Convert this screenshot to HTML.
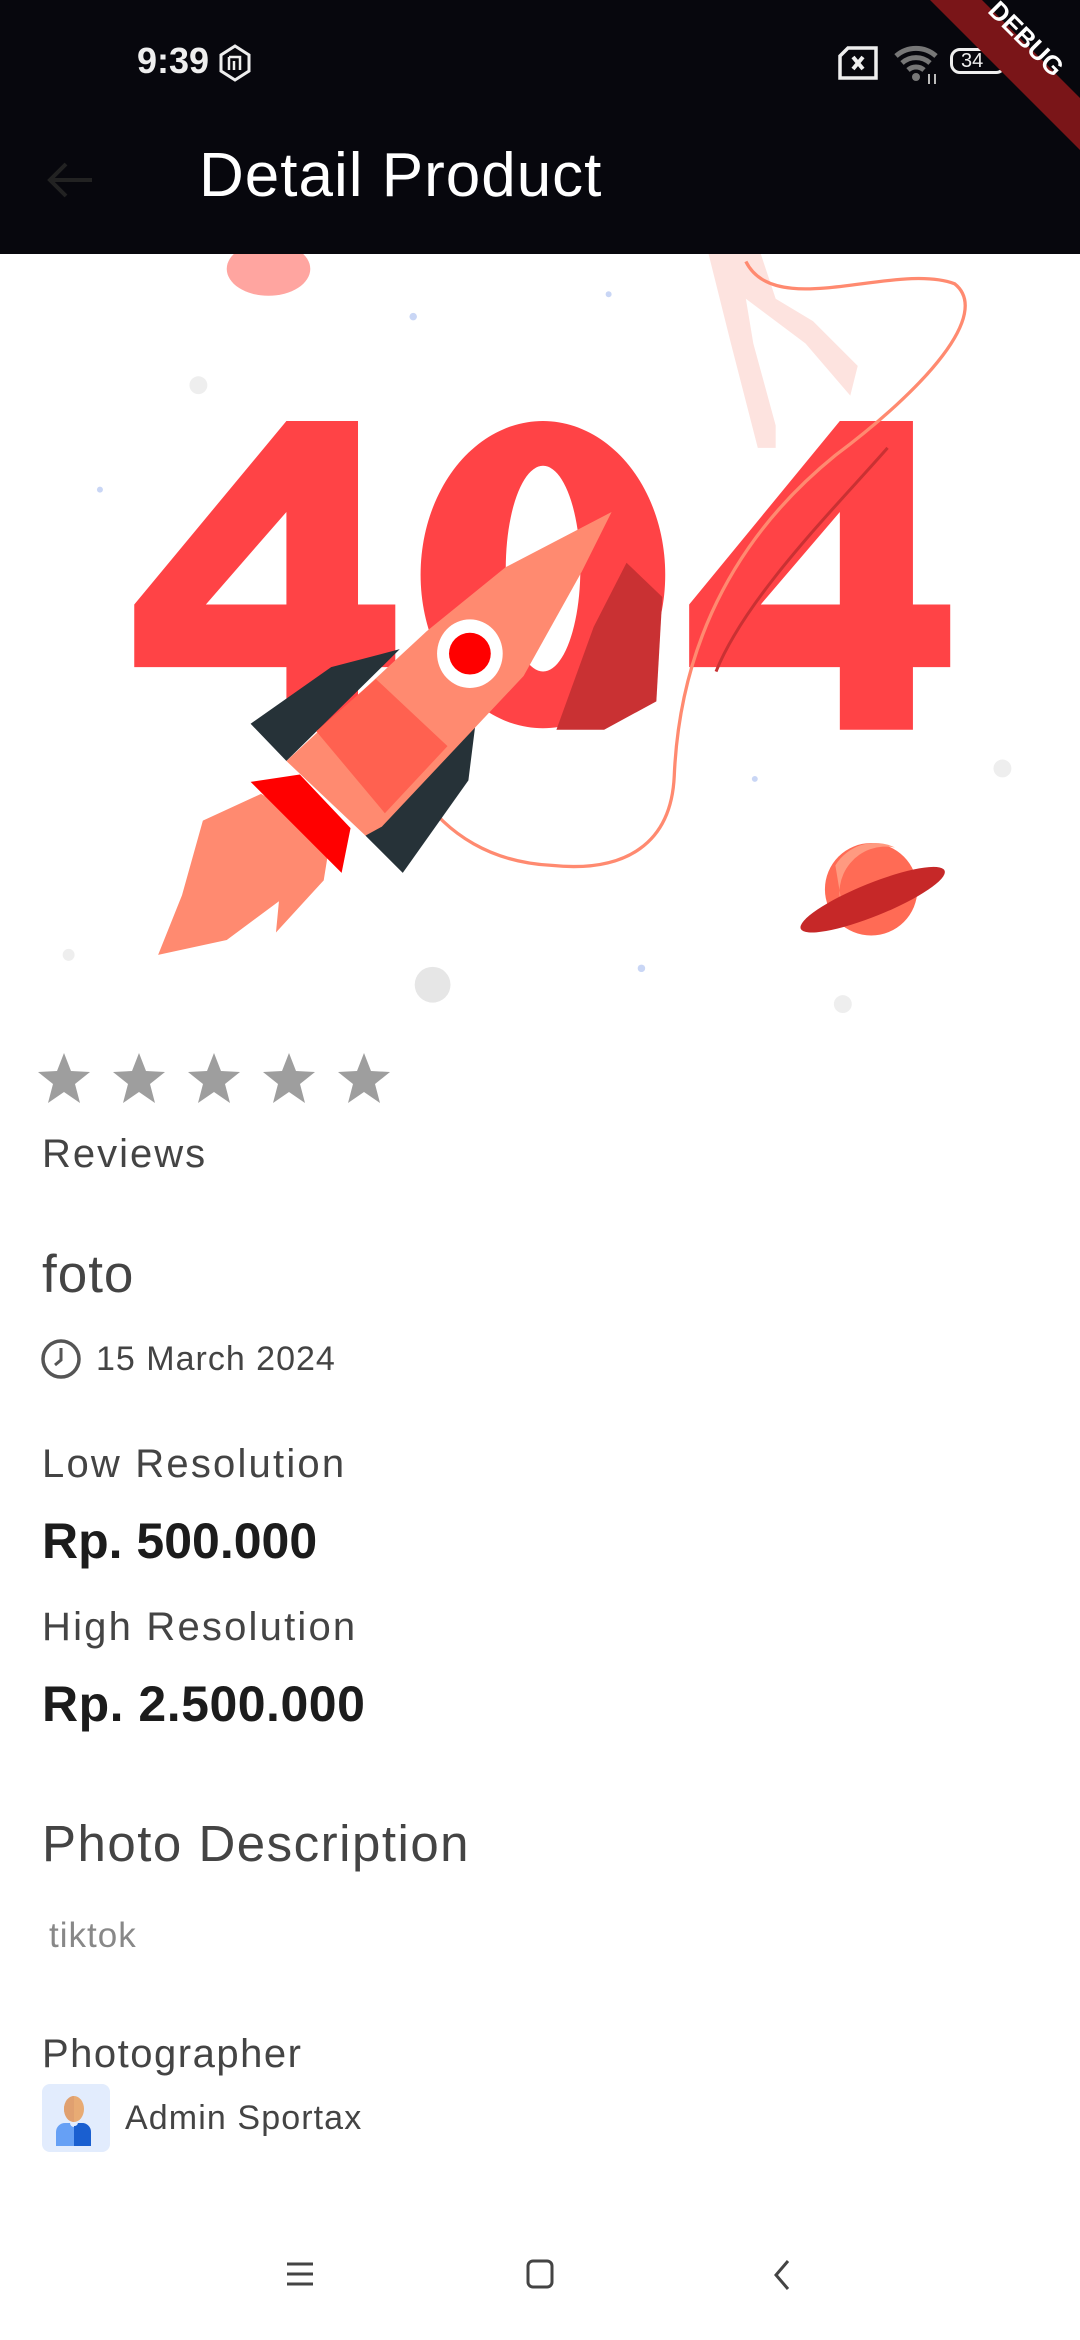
<!DOCTYPE html>
<html><head><meta charset="utf-8"><style>
*{margin:0;padding:0;box-sizing:border-box}
body{width:1080px;height:2340px;background:#fff;font-family:"Liberation Sans",sans-serif;position:relative;overflow:hidden;color:#444}
.abs{position:absolute;white-space:nowrap}
#hdr{position:absolute;left:0;top:0;width:1080px;height:254px;background:#07070d}
</style></head><body>
<div id="hdr">
  <div class="abs" style="left:137px;top:40px;font-size:36px;color:#eee;font-weight:bold">9:39</div>
  <svg class="abs" style="left:218px;top:44px" width="34" height="38" viewBox="0 0 34 38"><path d="M17 2L31 11V27L17 36L3 27V11Z" fill="none" stroke="#eee" stroke-width="3"/><path d="M11 13h11v13M11 13v13M16 17v9M22 17v9" stroke="#eee" stroke-width="2.5" fill="none"/></svg>
  <svg class="abs" style="left:838px;top:46px" width="40" height="34" viewBox="0 0 40 34"><path d="M10 2H38V32H2V10Z" fill="none" stroke="#eee" stroke-width="3.5"/><path d="M15 11l10 12M25 11l-10 12" stroke="#eee" stroke-width="4"/></svg>
  <svg class="abs" style="left:893px;top:44px" width="48" height="40" viewBox="0 0 48 40"><path d="M3 12a30 30 0 0 1 40 0M9 19a21 21 0 0 1 28 0M15 26a12 12 0 0 1 16 0" stroke="#777" stroke-width="5" fill="none"/><circle cx="23" cy="33" r="4" fill="#777"/><path d="M36 30v10M42 30v10" stroke="#bbb" stroke-width="2"/></svg>
  <div class="abs" style="left:950px;top:48px;width:56px;height:26px;border:3px solid #eee;border-radius:10px;font-size:20px;color:#eee;text-align:left;padding-left:8px;line-height:20px">34</div>
  <svg class="abs" style="left:40px;top:155px" width="60" height="50" viewBox="0 0 60 50"><path d="M52 25H10M26 9L10 25L26 41" stroke="#222" stroke-width="4" fill="none"/></svg>
  <div class="abs" style="left:199px;top:140px;font-size:62px;color:#fff;letter-spacing:1px">Detail Product</div>
</div>
<svg class="abs" style="left:900px;top:0" width="180" height="180" viewBox="0 0 180 180"><path d="M30 0H82L180 98V150Z" fill="#7a1518"/><text x="0" y="0" transform="translate(120 45) rotate(45)" text-anchor="middle" font-family="Liberation Sans" font-weight="bold" font-size="26" fill="#fff">DEBUG</text></svg>

<svg class="abs" style="left:0;top:254px" width="1080" height="768" viewBox="0 170 724 515" preserveAspectRatio="none">
  <ellipse cx="180" cy="180" rx="28" ry="18" fill="#ffa5a0"/>
  <path d="M462 170L475 170L490 230L508 300L520 300L520 285L505 230L500 200L540 230L570 265L575 245L545 215L520 200L510 170Z" fill="#fde3df"/>
  <g fill="#c9d6f5"><circle cx="277" cy="212" r="2.5"/><circle cx="408" cy="197" r="2"/><circle cx="67" cy="328" r="2"/><circle cx="506" cy="522" r="2"/><circle cx="430" cy="649" r="2.5"/></g>
  <g fill="#eee"><circle cx="133" cy="258" r="6"/><circle cx="672" cy="515" r="6"/><circle cx="565" cy="673" r="6"/><circle cx="46" cy="640" r="4"/></g>
  <circle cx="290" cy="660" r="12" fill="#e6e6e6"/>
  <path fill="#ff4346" fill-rule="evenodd" d="M192 282L240 282L240 405L265 405L265 447L240 447L240 489L192 489L192 447L90 447L90 405ZM192 343L192 405L138 405Z"/>
  <path fill="#ff4346" fill-rule="evenodd" d="M563 282L612 282L612 405L637 405L637 447L612 447L612 489L563 489L563 447L462 447L462 405ZM563 343L563 405L510 405Z"/>
  <path fill="#ff4346" fill-rule="evenodd" d="M364 282A82 103 0 1 1 363.9 282ZM364 312A25 69 0 1 0 364.1 312Z"/>
  <path fill="#c93133" d="M420 377L444 400L440 470L405 489L373 489L398 420Z"/>
  <path d="M595 300C560 340 500 400 480 450" stroke="#c93133" stroke-width="2" fill="none"/>
  <path d="M500 175C520 215 600 175 640 190C665 210 620 260 560 305C480 370 455 450 452 520C450 565 420 585 370 580C330 578 300 560 280 530" stroke="#ff8a70" stroke-width="2.2" fill="none"/>
  <path fill="#ff8a70" d="M175 532L136 550L122 600L106 640L152 630L187 604L185 625L217 590L222 559Z"/>
  <path fill="#f00" d="M201 519L168 524L229 585L235 555Z"/>
  <path fill="#263238" d="M268 435L222 447L168 485L192 510Z"/>
  <path fill="#263238" d="M319 483L314 523L270 585L245 560Z"/>
  <path fill="#ff8a70" d="M410 343L339 380L286 423L192 510L245 560L256 554L351 453L390 383Z"/>
  <path fill="#ff6150" d="M252 455L212 490L258 545L300 500Z"/>
  <ellipse cx="315" cy="438" rx="22" ry="23" fill="#fff"/>
  <circle cx="315" cy="438" r="14" fill="#f00"/>
  <circle cx="584" cy="596" r="31" fill="#ff6b55"/>
  <path d="M560 580A31 31 0 0 1 600 568A31 31 0 0 0 565 610Z" fill="#ff9a80"/>
  <ellipse cx="585" cy="603" rx="52" ry="11" transform="rotate(-22 585 603)" fill="#c62828"/>
</svg>

<svg class="abs" style="left:34px;top:1050px" width="370" height="60" viewBox="0 0 370 60">
  <g fill="#9e9e9e">
  <path id="s" d="M30 3L37 21L56 22L41 34L46 53L30 42L14 53L19 34L4 22L23 21Z"/>
  <use href="#s" x="75"/><use href="#s" x="150"/><use href="#s" x="225"/><use href="#s" x="300"/>
  </g>
</svg>
<div class="abs" style="left:42px;top:1132px;font-size:40px;letter-spacing:2px">Reviews</div>
<div class="abs" style="left:42px;top:1244px;font-size:53px;letter-spacing:1px">foto</div>
<svg class="abs" style="left:40px;top:1338px" width="42" height="42" viewBox="0 0 42 42"><circle cx="21" cy="21" r="18" fill="none" stroke="#555" stroke-width="3.5"/><path d="M21 10V22L15 27" stroke="#555" stroke-width="3" fill="none"/></svg>
<div class="abs" style="left:96px;top:1340px;font-size:34px;letter-spacing:1px">15 March 2024</div>
<div class="abs" style="left:42px;top:1442px;font-size:40px;letter-spacing:2.2px">Low Resolution</div>
<div class="abs" style="left:42px;top:1512px;font-size:50px;font-weight:bold;color:#1c1c1c">Rp. 500.000</div>
<div class="abs" style="left:42px;top:1605px;font-size:40px;letter-spacing:2.2px">High Resolution</div>
<div class="abs" style="left:42px;top:1675px;font-size:50px;font-weight:bold;color:#1c1c1c;letter-spacing:0.5px">Rp. 2.500.000</div>
<div class="abs" style="left:42px;top:1814px;font-size:51px;letter-spacing:1.5px">Photo Description</div>
<div class="abs" style="left:49px;top:1916px;font-size:35px;color:#888;letter-spacing:1px">tiktok</div>
<div class="abs" style="left:42px;top:2032px;font-size:40px;letter-spacing:1.5px">Photographer</div>
<svg class="abs" style="left:42px;top:2084px" width="68" height="68" viewBox="0 0 68 68"><rect width="68" height="68" rx="8" fill="#e2ecfd"/><ellipse cx="32" cy="25" rx="10" ry="13" fill="#e8ab74"/><path d="M22 25a10 13 0 0 1 10-13v26a10 13 0 0 1-10-13Z" fill="#e0a070"/><path d="M14 62V48a9 9 0 0 1 9-9h5a4 4 0 0 0 8 0h4a9 9 0 0 1 9 9v14Z" fill="#66a0f5"/><path d="M32 42a4 4 0 0 0 4-3h4a9 9 0 0 1 9 9v14H32Z" fill="#1a5fd0"/></svg>
<div class="abs" style="left:125px;top:2099px;font-size:34px;letter-spacing:1.1px">Admin Sportax</div>
<svg class="abs" style="left:285px;top:2259px" width="30" height="30" viewBox="0 0 30 30"><path d="M2 5h26M2 15h26M2 25h26" stroke="#444" stroke-width="3"/></svg>
<svg class="abs" style="left:526px;top:2259px" width="30" height="32" viewBox="0 0 30 32"><rect x="2" y="2" width="24" height="26" rx="5" fill="none" stroke="#444" stroke-width="3"/></svg>
<svg class="abs" style="left:770px;top:2259px" width="24" height="32" viewBox="0 0 24 32"><path d="M18 2L6 16L18 30" stroke="#444" stroke-width="3" fill="none"/></svg>
</body></html>
